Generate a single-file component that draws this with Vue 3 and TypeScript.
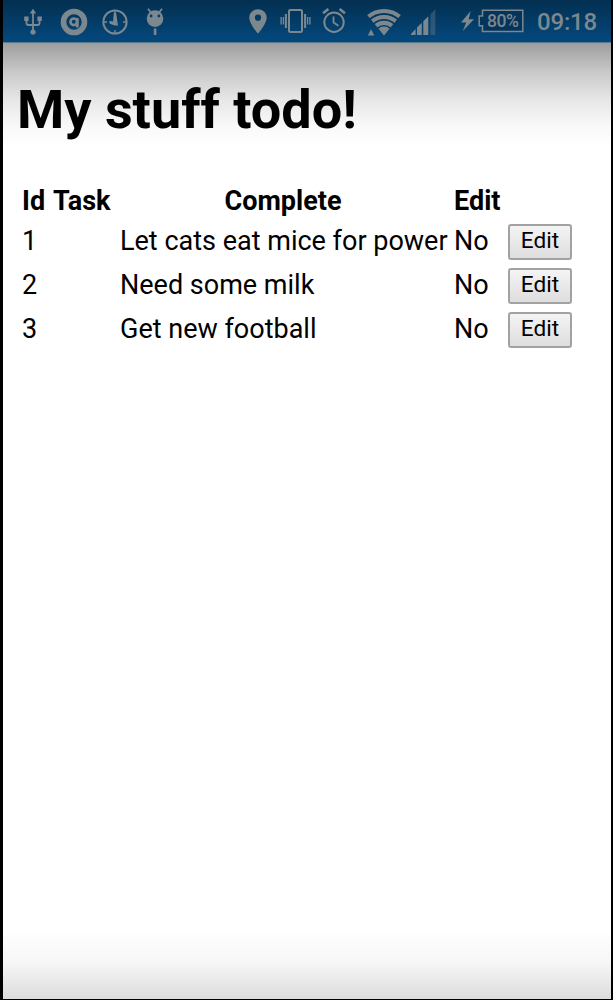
<script setup lang="ts">
interface Task {
  id: number
  name: string
  complete: boolean
}

const tasks: Task[] = [
  { id: 1, name: 'Let cats eat mice for power', complete: false },
  { id: 2, name: 'Need some milk', complete: false },
  { id: 3, name: 'Get new football', complete: false },
]
</script>

<template>
  <div class="phone">
    <header class="status">
      <svg class="usb" width="18" height="28" viewBox="0 0 18 28" fill="none" stroke="currentColor" stroke-width="1.8">
        <path d="M9 4V23M2.5 11v4q0 2 2 2h9q2 0 2-2v-3" />
        <path d="M9 .8 12.2 5.5H5.8zM.2 8.5h4.4v4.4H.2zM13.4 8.5h4.4v4.4h-4.4z" fill="currentColor" stroke="none" />
        <circle cx="9" cy="24" r="2.6" fill="currentColor" stroke="none" />
      </svg>
      <svg class="at" width="28" height="28" viewBox="0 0 28 28" fill="none">
        <circle cx="14" cy="14" r="10.5" stroke="currentColor" stroke-width="5.6" />
        <circle cx="13.8" cy="13.8" r="3.3" stroke="currentColor" stroke-width="2.6" />
        <path d="M17.3 10v9.5" stroke="currentColor" stroke-width="2.8" />
      </svg>
      <svg class="clock" width="26" height="26" viewBox="0 0 26 26" fill="none" stroke="currentColor" stroke-width="2">
        <circle cx="13" cy="13" r="11.6" />
        <path d="M13 2v3M13 21v3M2 13h3M21 13h3" stroke-width="1.4" />
        <path d="M11.8 4h2.4l1 7.2.8 5.6-4.2-.6-4.4-1.8.2-2.6 3.5.6z" fill="currentColor" stroke="none" />
      </svg>
      <svg class="droid" width="18" height="27" viewBox="0 0 18 27">
        <circle cx="9" cy="10.6" r="8.3" fill="currentColor" />
        <path d="M2 .8 5 4.6M16 .8 13 4.6" stroke="currentColor" stroke-width="1.7" />
        <circle cx="5.1" cy="8" r="1.4" fill="#053b67" />
        <circle cx="12.9" cy="8" r="1.4" fill="#053b67" />
        <path d="M7.8 20.5h2.6V27H7.8z" fill="currentColor" />
      </svg>
      <svg class="pin" width="18" height="25" viewBox="0 0 18 25">
        <path fill="currentColor" fill-rule="evenodd" d="M9 .3C4 .3.3 4 .3 8.8.3 15 9 24.7 9 24.7S17.7 15 17.7 8.8C17.7 4 14 .3 9 .3zM9 5.6a3.1 3.1 0 1 1 0 6.2 3.1 3.1 0 0 1 0-6.2z" />
      </svg>
      <svg class="vibrate" width="31" height="24" viewBox="0 0 31 24" fill="none" stroke="currentColor">
        <rect x="9" y="1" width="13" height="22" rx="1.3" stroke-width="2" />
        <path d="M5.9 5v14M25.1 5v14" stroke-width="2" />
        <path d="M1.1 8v7.5M3.4 8v7.5M27.6 8v7.5M29.9 8v7.5" stroke-width="1.3" />
      </svg>
      <svg class="alarm" width="24" height="25" viewBox="0 0 24 25" fill="none" stroke="currentColor" stroke-width="2">
        <circle cx="12" cy="14.2" r="9.7" />
        <path d="M1 5.2 6.4 1M17.6 1 23 5.2" stroke-width="2.6" />
        <path d="M11.5 8.5v6l5 3.3" stroke-width="1.8" />
      </svg>
      <svg class="wifi" width="34" height="28" viewBox="0 0 34 28" fill="none" stroke="currentColor" stroke-width="4.2">
        <clipPath id="wifi-wedge"><path d="M17 27.4-1.4 5V-2h36.8v7z" /></clipPath>
        <g clip-path="url(#wifi-wedge)">
          <circle cx="17" cy="27" r="24" />
          <circle cx="17" cy="27" r="18" />
          <circle cx="17" cy="27" r="12.2" />
          <circle cx="17" cy="27" r="8.4" fill="currentColor" stroke="none" />
        </g>
        <path d="M.8 27.6 4 21.2l3.3 6.4z" fill="currentColor" stroke="none" />
      </svg>
      <svg class="signal" width="25" height="26" viewBox="0 0 25 26" fill="currentColor">
        <path d="M0 26v-1l4.6-5v6zM6 26v-7.5l4.8-4.8V26zM12.3 26V12.2l5-5V26z" />
        <path d="m19.4 5.3 5-5V26h-5z" opacity=".35" />
      </svg>
      <svg class="bolt" width="13" height="20" viewBox="0 0 13 20">
        <path fill="currentColor" d="M9.7 0 0 11.5h5.2L1.8 20 13 8.3H7.6z" />
      </svg>
      <div class="battery">
        <svg width="46" height="24" viewBox="0 0 46 24">
          <path d="M4.5 1.2h40.3v21.3H4.5V16.7H1.2V7h3.3z" fill="#03345c" stroke="currentColor" stroke-width="1.5" />
        </svg>
        <span>80%</span>
      </div>
      <time>09:18</time>
    </header>

    <main>
      <h1>My stuff todo!</h1>
      <table>
        <colgroup>
          <col class="c-id"><col class="c-task"><col class="c-name"><col class="c-done"><col class="c-edit">
        </colgroup>
        <thead>
          <tr>
            <th>Id</th>
            <th>Task</th>
            <th class="center">Complete</th>
            <th>Edit</th>
            <th></th>
          </tr>
        </thead>
        <tbody>
          <tr v-for="task in tasks" :key="task.id">
            <td>{{ task.id }}</td>
            <td></td>
            <td>{{ task.name }}</td>
            <td>{{ task.complete ? 'Yes' : 'No' }}</td>
            <td><button type="button">Edit</button></td>
          </tr>
        </tbody>
      </table>
    </main>
  </div>
</template>

<style>
body {
  margin: 0;
  background: #000;
}
</style>

<style scoped>
.phone {
  box-sizing: border-box;
  width: 613px;
  height: 1000px;
  border: solid #000;
  border-width: 0 2px 1px 3px;
  display: flex;
  flex-direction: column;
  font-family: Roboto, sans-serif;
  color: #000;
  background: #fff;
  overflow: hidden;
}
.status {
  box-sizing: border-box;
  flex: none;
  height: 43px;
  padding-left: 21px;
  display: flex;
  align-items: flex-start;
  color: #7c888e;
  background: linear-gradient(#032f50, #04477b 95%);
  border-bottom: 1px solid #587b8d;
}
.status svg {
  display: block;
  flex: none;
}
.usb { margin-top: 8px; }
.at { margin: 8px 0 0 18px; }
.clock { margin: 9px 0 0 14px; }
.droid { margin: 8px 0 0 18px; }
.pin { margin: 9px 0 0 85px; }
.vibrate { margin: 9px 0 0 13px; }
.alarm { margin: 8px 0 0 11px; }
.wifi { margin: 8px 0 0 21px; }
.signal { margin: 9px 0 0 10px; }
.bolt { margin: 11px 0 0 25px; }
.battery {
  margin: 9px 0 0 4px;
  display: grid;
}
.battery > * { grid-area: 1 / 1; }
.battery span {
  padding-left: 9px;
  font-size: 17.5px;
  font-weight: 500;
  letter-spacing: -0.4px;
  line-height: 24px;
}
time {
  margin: 8px 0 0 13px;
  font-size: 24px;
  font-weight: 500;
  letter-spacing: -0.2px;
  line-height: 28px;
}
main {
  flex: 1;
  padding: 33px 0 0 14px;
  background:
    linear-gradient(#9d9d9d, #c9c9c9 28%, #e7e7e7 55%, #f9f9f9 80%, #fff) top / 100% 104px no-repeat,
    linear-gradient(#fff, #f7f7f7 45%, #dcdcdc) bottom / 100% 68px no-repeat,
    #fff;
}
h1 {
  margin: 0;
  font-size: 54px;
  line-height: 68px;
  font-weight: 700;
}
table {
  width: 567px;
  margin: 40px 0 0 5px;
  table-layout: fixed;
  border-collapse: collapse;
  font-size: 27px;
}
.c-id { width: 31px; }
.c-task { width: 67px; }
.c-name { width: 334px; }
.c-done { width: 54px; }
th, td {
  padding: 0;
  height: 44px;
  line-height: 34px;
  text-align: left;
  vertical-align: top;
  white-space: nowrap;
}
th {
  height: 40px;
  font-weight: 700;
}
.center {
  padding-right: 8px;
  text-align: center;
}
button {
  box-sizing: border-box;
  display: block;
  width: 64px;
  height: 36px;
  padding: 0 0 3px;
  border: 2px solid #a2a2a2;
  border-radius: 3px;
  background: linear-gradient(#f4f4f4, #dedede);
  font: 22.6px / 28px Roboto, sans-serif;
  color: #000;
}
</style>
